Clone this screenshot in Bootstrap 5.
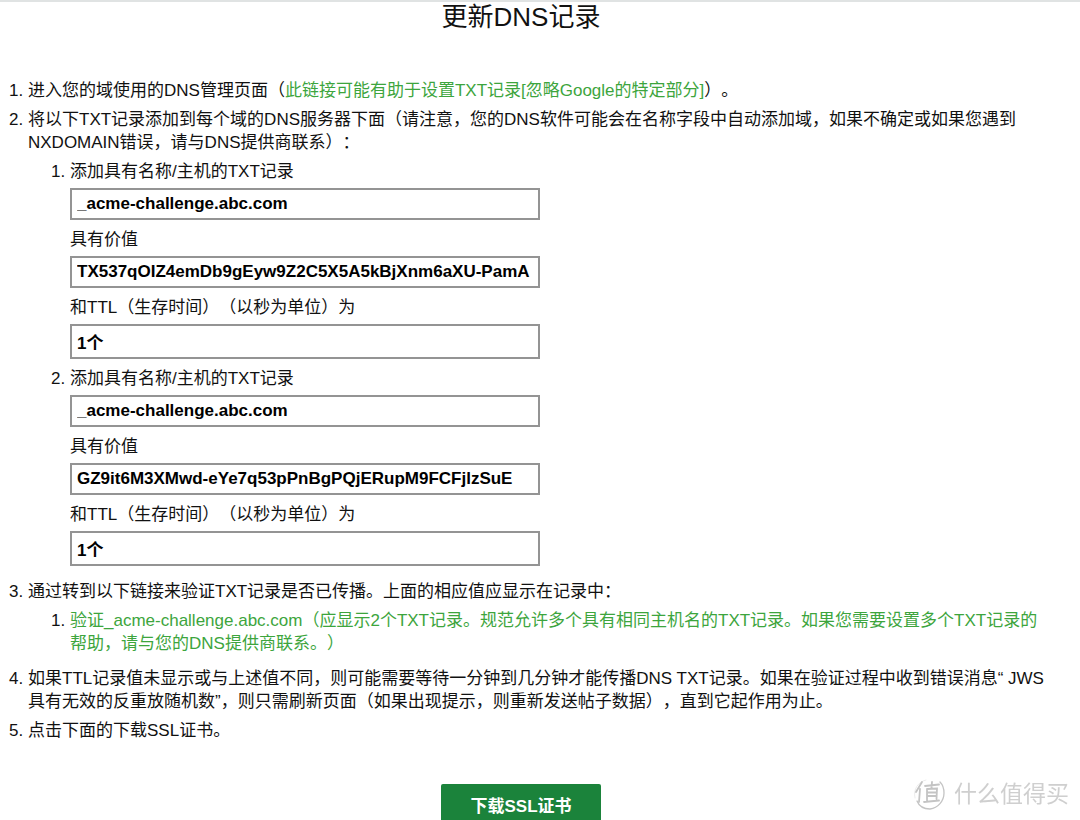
<!DOCTYPE html>
<html lang="zh-CN">
<head>
<meta charset="utf-8">
<meta name="viewport" content="width=device-width, initial-scale=1">
<title>更新DNS记录</title>
<link href="https://cdn.jsdelivr.net/npm/bootstrap@5.3.0/dist/css/bootstrap.min.css" rel="stylesheet">
<style>
  body { font-family: "Liberation Sans", "Noto Sans CJK SC", sans-serif; font-size: 17px; line-height: 23px; color: #111; text-spacing-trim: space-all; }
  .page-top { border-top: 2px solid #e0e3e3; }
  .centered-row { padding-right: 38px; text-align: center; }
  .page-title { font-size: 26px; line-height: 30px; margin-bottom: 47px; font-weight: 400; color: #111; }
  .steps { padding-left: 28px; padding-right: 30px; margin-bottom: 42px; }
  .steps li { margin-bottom: 6px; }
  .substeps { display: flow-root; padding-left: 42px; margin: 6px 0 0; }
  .steps a { color: #3da53d; text-decoration: none; }
  .steps a:hover { text-decoration: underline; }
  .record-field { margin-bottom: 8px; }
  .record-field label { display: block; margin-bottom: 5px; }
  .record-field .form-control { max-width: 470px; height: 32px; padding: 0 5px; border: 2px solid #949494; border-radius: 0; font-size: 17px; line-height: 23px; font-weight: 700; color: #000; }
  .record-field .ttl-input { height: 35px; }
  .btn-download { --bs-btn-bg: #1b833b; --bs-btn-color: #fff; --bs-btn-hover-bg: #166d31; --bs-btn-hover-color: #fff; width: 160px; height: 44px; padding: 0; border: 0; border-radius: 2px; font-size: 17px; line-height: 23px; font-weight: 700; }
  .watermark { right: 11px; bottom: 9px; color: #cfcfcf; font-size: 23px; line-height: 34px; pointer-events: none; }
</style>
</head>
<body>
<main class="page-top">
  <h1 class="page-title centered-row">更新DNS记录</h1>
  <ol class="steps">
    <li>进入您的域使用的DNS管理页面（<a href="#">此链接可能有助于设置TXT记录[忽略Google的特定部分]</a>）。</li>
    <li>将以下TXT记录添加到每个域的DNS服务器下面（请注意，您的DNS软件可能会在名称字段中自动添加域，如果不确定或如果您遇到NXDOMAIN错误，请与DNS提供商联系）：
      <ol class="substeps">
        <li>
          <div class="record-field"><label for="name1">添加具有名称/主机的TXT记录</label><input class="form-control" id="name1" type="text" readonly value="_acme-challenge.abc.com"></div>
          <div class="record-field"><label for="value1">具有价值</label><input class="form-control" id="value1" type="text" readonly value="TX537qOIZ4emDb9gEyw9Z2C5X5A5kBjXnm6aXU-PamA"></div>
          <div class="record-field"><label for="ttl1">和TTL（生存时间）（以秒为单位）为</label><input class="form-control ttl-input" id="ttl1" type="text" readonly value="1个"></div>
        </li>
        <li>
          <div class="record-field"><label for="name2">添加具有名称/主机的TXT记录</label><input class="form-control" id="name2" type="text" readonly value="_acme-challenge.abc.com"></div>
          <div class="record-field"><label for="value2">具有价值</label><input class="form-control" id="value2" type="text" readonly value="GZ9it6M3XMwd-eYe7q53pPnBgPQjERupM9FCFjlzSuE"></div>
          <div class="record-field"><label for="ttl2">和TTL（生存时间）（以秒为单位）为</label><input class="form-control ttl-input" id="ttl2" type="text" readonly value="1个"></div>
        </li>
      </ol>
    </li>
    <li>通过转到以下链接来验证TXT记录是否已传播。上面的相应值应显示在记录中：
      <ol class="substeps">
        <li><a href="#">验证_acme-challenge.abc.com（应显示2个TXT记录。规范允许多个具有相同主机名的TXT记录。如果您需要设置多个TXT记录的帮助，请与您的DNS提供商联系。）</a></li>
      </ol>
    </li>
    <li>如果TTL记录值未显示或与上述值不同，则可能需要等待一分钟到几分钟才能传播DNS TXT记录。如果在验证过程中收到错误消息“ JWS具有无效的反重放随机数”，则只需刷新页面（如果出现提示，则重新发送帖子数据），直到它起作用为止。</li>
    <li>点击下面的下载SSL证书。</li>
  </ol>
  <div class="centered-row"><button type="button" class="btn btn-download">下载SSL证书</button></div>
</main>
<div class="watermark position-fixed d-flex align-items-center gap-2" aria-hidden="true">
  <svg width="32" height="32" viewBox="0 0 32 32" fill="none" stroke="#c4c4c4" stroke-linecap="round">
    <path d="M3 23C5 28 10 31 16 31C24 30 30 23 30 15C30 10 28 6 26 4" stroke-width="1.300"/>
    <path d="M1 20C-1 11 4 4 12 2" stroke="#ececec"/>
    <path d="M8 4L2 14M6 11L5 24M11 8L25 6.500M18 4L17.500 10M13 11L23 10.500L22.500 21M13 11L13 22.500M14 14.500H22M14 18H22M10 24L25 22.500" stroke-width="1.800"/>
  </svg>
  <span>什么值得买</span>
</div>
<script src="https://cdn.jsdelivr.net/npm/bootstrap@5.3.0/dist/js/bootstrap.bundle.min.js"></script>
</body>
</html>
